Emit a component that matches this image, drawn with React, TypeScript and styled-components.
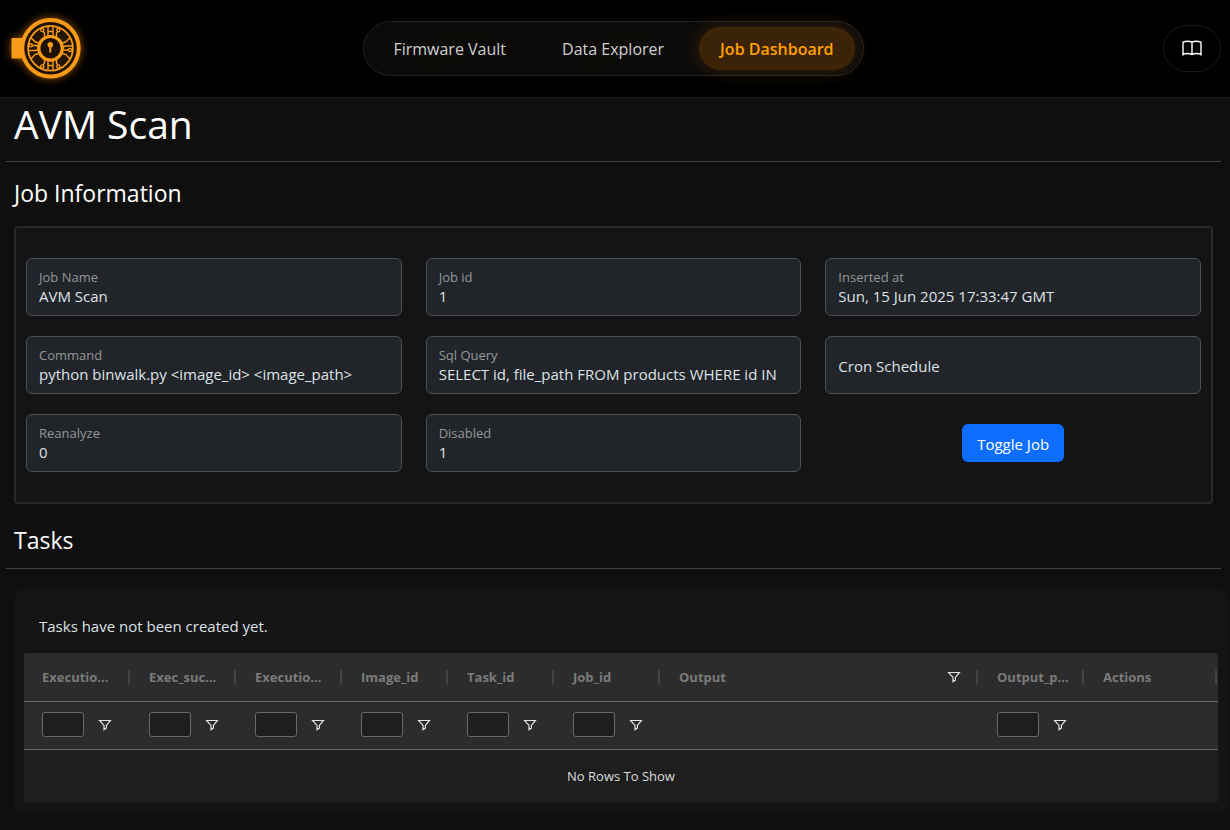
import React from "react";
import styled, { createGlobalStyle, css } from "styled-components";

const GlobalStyle = createGlobalStyle`
  *, *::before, *::after { box-sizing: border-box; }
  body {
    margin: 0;
    background: #0f0f0f;
    color: #dee2e6;
    font-family: "Open Sans", "Noto Sans", sans-serif;
    font-size: 15px;
    line-height: 24px;
  }
  button, input { font: inherit; color: inherit; }
`;

const Header = styled.header`
  display: grid;
  grid-template-columns: 1fr auto 1fr;
  align-items: center;
  height: 98px;
  padding: 0 9px 0 6px;
  background: #000;
  border-bottom: 1px solid #1e1e1e;
`;

const LogoLink = styled.a`
  display: flex;
  justify-self: start;
  filter: drop-shadow(0 0 4px rgba(255, 140, 0, 0.6));
`;

const Nav = styled.nav`
  display: flex;
  gap: 14px;
  padding: 5px 8px;
  border: 1px solid #232323;
  border-radius: 28px;
  background: #0a0a0a;
`;

const NavLink = styled.a<{ $active?: boolean }>`
  padding: 10px 21px 9px;
  border-radius: 22px;
  color: #d0d0d0;
  font-size: 16px;
  text-decoration: none;
  white-space: nowrap;
  background: linear-gradient(135deg, #0a0a0a, #0d0b08, #0a0a0a);
  ${(p) =>
    p.$active &&
    css`
      color: #ffa000;
      font-weight: 600;
      background: #3a2309;
      box-shadow: 0 0 20px rgba(255, 140, 0, 0.2),
        inset 0 0 12px rgba(255, 140, 0, 0.06);
    `}
`;

const DocsButton = styled.button`
  display: flex;
  align-items: center;
  justify-content: center;
  justify-self: end;
  width: 58px;
  height: 47px;
  padding: 0;
  border: 1px solid #1a1a1a;
  border-radius: 28px;
  background: #000;
  color: #fff;
`;

const Main = styled.main`
  padding: 2px 2px 17px 6px;
`;

const PageTitle = styled.h1`
  margin: 0;
  padding: 0 8px 13px;
  color: #fff;
  font-size: 39px;
  font-weight: 400;
  line-height: 48px;
`;

const SectionTitle = styled.h2`
  margin: 0;
  padding: 15px 8px 12px;
  color: #fff;
  font-size: 23px;
  font-weight: 400;
  line-height: 32px;
`;

const Rule = styled.hr`
  height: 1px;
  margin: 0 7px 0 0;
  border: 0;
  background: #424242;
`;

const InfoCard = styled.form`
  display: grid;
  grid-template-columns: repeat(3, 1fr);
  gap: 20px 24px;
  margin: 5px 15px 5px 8px;
  padding: 30px 10px;
  border: 2px solid #282828;
  border-radius: 4px;
  background: #141414;
`;

const FieldBox = styled.div`
  display: grid;
  height: 58px;
`;

const FieldInput = styled.input`
  grid-area: 1 / 1;
  width: 100%;
  min-width: 0;
  padding: 25px 12px 7px;
  border: 1px solid #495057;
  border-radius: 6px;
  background: #212529;
  color: #dee2e6;
  outline: none;
`;

const FieldLabel = styled.label<{ $floating: boolean }>`
  grid-area: 1 / 1;
  z-index: 1;
  padding: 0 13px;
  pointer-events: none;
  ${(p) =>
    p.$floating
      ? css`
          padding-top: 9px;
          color: #959698;
          font-size: 13px;
          line-height: 20px;
        `
      : css`
          align-self: center;
          padding-top: 2px;
        `}
`;

const ToggleButton = styled.button`
  place-self: center;
  height: 38px;
  padding: 1px 15px 0;
  border: 0;
  border-radius: 6px;
  background: #0d6efd;
  color: #fff;
`;

const TasksPanel = styled.section`
  margin: 20px 0 0 8px;
  padding: 25px 10px 10px;
  border-radius: 10px;
  background: #141414;
`;

const Message = styled.p`
  margin: 0;
  padding: 0 15px 15px;
`;

const GridFrame = styled.div`
  overflow: hidden;
  border-radius: 3px;
  background: #1e1e1e;
`;

const Grid = styled.table`
  width: 100%;
  border-collapse: separate;
  border-spacing: 0;
  table-layout: fixed;
  font-size: 13px;
  line-height: 20px;
`;

const HeadCell = styled.th`
  height: 49px;
  padding: 0 0 0 18px;
  border-bottom: 1px solid #68686e;
  background: #2c2c2c;
  color: #7b7b7b;
  text-align: left;
  font-weight: 700;
`;

const HeadContent = styled.div`
  display: flex;
  align-items: center;
  height: 14px;
  border-right: 2px solid #434343;
  margin-right: 1px;
  white-space: nowrap;
`;

const HeadText = styled.span`
  flex: 1;
`;

const FilterCell = styled.td`
  height: 48px;
  padding: 0 0 2px 18px;
  border-bottom: 1px solid #68686e;
  background: #2c2c2c;
`;

const FilterContent = styled.div`
  display: flex;
  align-items: center;
  gap: 14px;
`;

const FilterInput = styled.input`
  width: 42px;
  height: 25px;
  padding: 0 5px;
  border: 1px solid #68686e;
  border-radius: 3px;
  background: #1e1e1e;
  outline: none;
`;

const IconButton = styled.button<{ $end?: boolean }>`
  display: flex;
  padding: 0;
  border: 0;
  background: none;
  color: #e4e4e4;
  margin-right: ${(p) => (p.$end ? 15 : 0)}px;
`;

const EmptyCell = styled.td`
  height: 53px;
  padding: 0 0 2px;
  color: #dcdcdc;
  text-align: center;
`;

const Logo = () => (
  <svg width="78" height="70" viewBox="6 14 78 70" fill="none" stroke="#f79a18" role="img" aria-label="Home">
    <rect x="11.5" y="38" width="13" height="20.5" rx="1" fill="#f79a18" stroke="none" />
    <circle cx="50.5" cy="48.3" r="28.2" fill="#1c1103" strokeWidth="4" />
    <circle cx="50.5" cy="48.3" r="22.4" fill="#241503" strokeWidth="1.8" />
    <g strokeWidth="1.4">
      <path d="M48 26v10M53 26v10M48 60v11M53 60v11M48 31.500h5M48 65.500h5" />
      <path d="M44.500 38v-5l-1.500-1.500M56.500 38v-5l1.500-1.500M44.500 59v4l-1.500 2M56.500 59v4l1.500 2" />
      <path d="M32.300 45.500h3.700l3.500 1M29 50.500h6l4-1M30.500 37.500l5 4.500 5 1.500M30.500 59.500l4.500-5 5.500-1.500" />
      <path d="M68.500 50h-7M72 46h-6l-4.500 1.500M70.500 37.500l-5 4.500-5 1.500M70.500 59.500l-4.500-5-5.500-1.500" />
      <circle cx="42.3" cy="30" r="1.6" />
      <circle cx="58.3" cy="30" r="1.6" />
      <circle cx="42.3" cy="66.5" r="1.6" />
      <circle cx="58.3" cy="66.5" r="1.6" />
      <circle cx="30.7" cy="45.3" r="1.6" />
      <circle cx="70" cy="50" r="1.6" />
    </g>
    <circle cx="50.5" cy="48.3" r="11.8" fill="#1c1103" strokeWidth="3.2" />
    <circle cx="50.3" cy="44.8" r="2.8" fill="#f79a18" stroke="none" />
    <path d="M50.3 46v6.500" strokeWidth="2" />
  </svg>
);

const BookIcon = () => (
  <svg width="20" height="17" viewBox="0 0 20 17" fill="none" stroke="currentColor" strokeWidth="1.4" aria-hidden="true">
    <path d="M1 15.500V2.200C3.500 1.200 7.500 1 10 2.200C12.500 1 16.500 1.200 19 2.200V15.500M1 14.300C4 13.200 7.500 13.300 10 14.500C12.500 13.300 16 13.200 19 14.300M10 2.200V14.500" />
  </svg>
);

const FilterIcon = () => (
  <svg width="14" height="14" viewBox="0 0 14 14" fill="none" stroke="currentColor" strokeWidth="1.2" aria-hidden="true">
    <path d="M1.600 2.500H12.400L8.400 7.400V10.200L6 11.600V7.400Z" />
  </svg>
);

const fields = [
  { id: "name", label: "Job Name", value: "AVM Scan" },
  { id: "job-id", label: "Job id", value: "1" },
  { id: "inserted", label: "Inserted at", value: "Sun, 15 Jun 2025 17:33:47 GMT" },
  { id: "command", label: "Command", value: "python binwalk.py <image_id> <image_path>" },
  { id: "sql", label: "Sql Query", value: "SELECT id, file_path FROM products WHERE id IN" },
  { id: "cron", label: "Cron Schedule", value: "" },
  { id: "reanalyze", label: "Reanalyze", value: "0" },
  { id: "disabled", label: "Disabled", value: "1" },
];

type Column = { title: string; width?: number; filter: "row" | "head" | "none" };

const columns: Column[] = [
  { title: "Executio...", width: 107, filter: "row" },
  { title: "Exec_suc...", width: 106, filter: "row" },
  { title: "Executio...", width: 106, filter: "row" },
  { title: "Image_id", width: 106, filter: "row" },
  { title: "Task_id", width: 106, filter: "row" },
  { title: "Job_id", width: 106, filter: "row" },
  { title: "Output", filter: "head" },
  { title: "Output_p...", width: 106, filter: "row" },
  { title: "Actions", width: 133, filter: "none" },
];

const Col = styled.col<{ $width?: number }>`
  width: ${(p) => (p.$width ? `${p.$width}px` : "auto")};
`;

export default function App() {
  return (
    <>
      <GlobalStyle />
      <Header>
        <LogoLink href="#">
          <Logo />
        </LogoLink>
        <Nav>
          <NavLink href="#vault">Firmware Vault</NavLink>
          <NavLink href="#explorer">Data Explorer</NavLink>
          <NavLink href="#jobs" $active aria-current="page">
            Job Dashboard
          </NavLink>
        </Nav>
        <DocsButton type="button" aria-label="Documentation">
          <BookIcon />
        </DocsButton>
      </Header>
      <Main>
        <PageTitle>AVM Scan</PageTitle>
        <Rule />
        <SectionTitle>Job Information</SectionTitle>
        <InfoCard>
          {fields.map((f) => (
            <FieldBox key={f.id}>
              <FieldInput id={f.id} value={f.value} readOnly />
              <FieldLabel htmlFor={f.id} $floating={f.value !== ""}>
                {f.label}
              </FieldLabel>
            </FieldBox>
          ))}
          <ToggleButton type="button">Toggle Job</ToggleButton>
        </InfoCard>
        <SectionTitle>Tasks</SectionTitle>
        <Rule />
        <TasksPanel>
          <Message>Tasks have not been created yet.</Message>
          <GridFrame>
            <Grid>
              <colgroup>
                {columns.map((c, i) => (
                  <Col key={i} $width={c.width} />
                ))}
              </colgroup>
              <thead>
                <tr>
                  {columns.map((c, i) => (
                    <HeadCell key={i} scope="col">
                      <HeadContent>
                        <HeadText>{c.title}</HeadText>
                        {c.filter === "head" && (
                          <IconButton type="button" $end aria-label={`Filter ${c.title}`}>
                            <FilterIcon />
                          </IconButton>
                        )}
                      </HeadContent>
                    </HeadCell>
                  ))}
                </tr>
                <tr>
                  {columns.map((c, i) => (
                    <FilterCell key={i}>
                      {c.filter === "row" && (
                        <FilterContent>
                          <FilterInput type="text" aria-label={`${c.title} filter value`} />
                          <IconButton type="button" aria-label={`Filter ${c.title}`}>
                            <FilterIcon />
                          </IconButton>
                        </FilterContent>
                      )}
                    </FilterCell>
                  ))}
                </tr>
              </thead>
              <tbody>
                <tr>
                  <EmptyCell colSpan={columns.length}>No Rows To Show</EmptyCell>
                </tr>
              </tbody>
            </Grid>
          </GridFrame>
        </TasksPanel>
      </Main>
    </>
  );
}
